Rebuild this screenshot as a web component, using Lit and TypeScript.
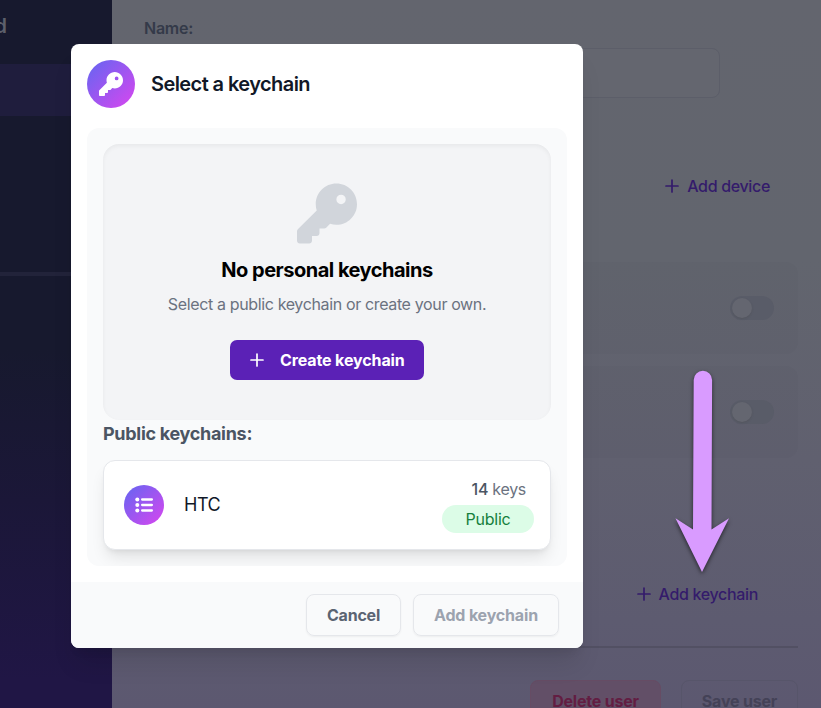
import { LitElement, html, css, svg } from "lit";
import { customElement, property } from "lit/decorators.js";

const keyIcon = (cls: string) => html`<svg class=${cls} viewBox="0 0 512 512" fill="currentColor"><path d="M336 352c97.2 0 176-78.8 176-176S433.2 0 336 0S160 78.8 160 176c0 18.7 2.9 36.8 8.3 53.7L7 391c-4.5 4.5-7 10.6-7 17v80c0 13.3 10.7 24 24 24h80c13.3 0 24-10.7 24-24V448h40c13.3 0 24-10.7 24-24V384h40c6.4 0 12.5-2.5 17-7l33.3-33.3c16.9 5.4 35 8.3 53.7 8.3zM376 96a40 40 0 1 1 0 80 40 40 0 1 1 0-80z"/></svg>`;

const plusIcon = html`<svg class="plus" viewBox="0 0 14 14" fill="none" stroke="currentColor" stroke-width="1.7" stroke-linecap="round"><path d="M7 1v12M1 7h12"/></svg>`;

const listIcon = html`<svg class="list" viewBox="0 0 20 16" fill="currentColor">${[2.5, 8, 13.5].map(
  (y) => svg`<circle cx="3.3" cy=${y} r="2"/><rect x="7" y=${y - 1.2} width="12" height="2.4" rx="1.1"/>`
)}</svg>`;

@customElement("app-backdrop")
export class AppBackdrop extends LitElement {
  static styles = css`
    :host { display: flex; height: 708px; overflow: hidden; }
    * { box-sizing: border-box; }
    .side { width: 112px; flex: none; overflow: hidden; background: linear-gradient(#17192e 0, #17192e 350px, #1b1738 500px, #201645 680px); }
    .brand { display: flex; justify-content: flex-end; width: 7px; height: 64px; padding-top: 11px; font: 600 20px/30px Inter, sans-serif; color: #5d606c; }
    .active { height: 52px; background: #1f1d3d; }
    .rule { height: 4px; margin-top: 156px; background: #22233a; }
    .main { flex: 1; padding: 16px 23px 0 32px; display: flex; flex-direction: column; background: linear-gradient(#63656e 0, #62656e 260px, #60606f 460px, #5d5b70 620px, #5c5870 708px); }
    .main > * { flex-shrink: 0; }
    .label { font: 600 16px/24px Inter, sans-serif; color: #343a49; letter-spacing: -.25px; }
    .input { width: 576px; height: 50px; margin-top: 8px; border: 1px solid #5c5e69; border-radius: 8px; background: #64666f; }
    .add { display: flex; align-items: center; gap: 8px; align-self: flex-end; height: 24px; font: 500 16px/24px Inter, sans-serif; color: #341b6b; letter-spacing: -.33px; white-space: nowrap; }
    .device { margin: 76px 28px 0 0; }
    .chain { margin: 124px 40px 0 0; }
    .plus { width: 14px; height: 14px; }
    .row { height: 92px; border-radius: 12px; background: #0f172a05; display: flex; justify-content: flex-end; align-items: center; padding-right: 24px; }
    .first { margin: 64px 0 12px; }
    .toggle { width: 44px; height: 24px; padding: 2px; border-radius: 12px; background: #595c68; }
    .knob { width: 20px; height: 20px; border-radius: 50%; background: #646670; box-shadow: 0 1px 2px #4444; }
    .line { height: 2px; margin-top: 40px; background: #525063; }
    .actions { display: flex; justify-content: flex-end; gap: 20px; margin-top: 32px; }
    .btn { height: 42px; border: 1px solid #57556a; border-radius: 8px; font: 700 16px/40px Inter, sans-serif; text-align: center; letter-spacing: -.2px; }
    .delete { width: 131px; background: #624f67; border-color: #664c64; color: #631d42; }
    .save { width: 117px; color: #444257; }
  `;
  render() {
    return html`
      <div class="side"><div class="brand">d</div><div class="active"></div><div class="rule"></div></div>
      <div class="main">
        <div class="label">Name:</div>
        <div class="input"></div>
        <div class="add device">${plusIcon}<span>Add device</span></div>
        <div class="row first"><div class="toggle"><div class="knob"></div></div></div>
        <div class="row"><div class="toggle"><div class="knob"></div></div></div>
        <div class="add chain">${plusIcon}<span>Add keychain</span></div>
        <div class="line"></div>
        <div class="actions"><div class="btn delete">Delete user</div><div class="btn save">Save user</div></div>
      </div>`;
  }
}

@customElement("keychain-card")
export class KeychainCard extends LitElement {
  @property() name = "";
  @property({ type: Number }) keys = 0;
  static styles = css`
    :host { display: flex; align-items: center; box-sizing: border-box; height: 90px; padding: 0 16px 0 20px; border: 1px solid #e5e7eb; border-radius: 12px; background: #fff; box-shadow: 0 10px 15px -3px #0000001a, 0 4px 6px -4px #0000001a; }
    .disc { width: 40px; height: 40px; border-radius: 50%; display: grid; place-items: center; color: #fff; background: linear-gradient(135deg, #6366f1, #d946ef); }
    .list { width: 20px; height: 16px; display: block; }
    .name { flex: 1; margin-left: 20px; font: 400 18px/28px Inter, sans-serif; color: #111827; letter-spacing: -.45px; }
    .meta { display: flex; flex-direction: column; align-items: flex-end; font: 400 16px/24px Inter, sans-serif; color: #6b7280; }
    .count { margin: 0 8px 4px 0; letter-spacing: -.3px; }
    b { font-weight: 500; color: #4b5563; }
    .badge { width: 92px; height: 28px; line-height: 28px; border-radius: 14px; text-align: center; background: #dcfce7; color: #15803d; letter-spacing: -.25px; }
  `;
  render() {
    return html`<div class="disc">${listIcon}</div><div class="name">${this.name}</div>
      <div class="meta"><div class="count"><b>${this.keys}</b> keys</div><div class="badge">Public</div></div>`;
  }
}

@customElement("app-root")
export class AppRoot extends LitElement {
  static styles = css`
    :host { display: block; position: relative; width: 821px; height: 708px; overflow: hidden; font-family: Inter, sans-serif; }
    * { box-sizing: border-box; }
    .modal { position: absolute; left: 71px; top: 44px; width: 512px; border-radius: 8px; background: #fff; overflow: hidden; }
    .shadow { position: absolute; left: 71px; top: 44px; width: 512px; height: 604px; border-radius: 8px; box-shadow: 0 20px 25px -5px #0000001a, 0 8px 10px -6px #0000001a; }
    .head { display: flex; align-items: center; gap: 16px; height: 84px; padding: 16px 16px 20px; }
    .disc { width: 48px; height: 48px; border-radius: 50%; display: grid; place-items: center; color: #fff; background: linear-gradient(135deg, #6366f1, #d946ef); }
    .key-sm { width: 24px; height: 24px; }
    .title { font-weight: 600; font-size: 20px; line-height: 28px; color: #111827; letter-spacing: -.58px; }
    .panel { margin: 0 16px 16px; padding: 16px; height: 438px; border-radius: 12px; background: #f9fafb; overflow: hidden; }
    .empty { height: 276px; padding-top: 39px; border-radius: 16px; background: #f3f4f6; box-shadow: inset 0 2px 4px #0000000d; display: flex; flex-direction: column; align-items: center; }
    .key-lg { width: 60px; height: 61px; color: #d1d5db; }
    .none { margin-top: 12px; font-weight: 700; font-size: 20px; line-height: 28px; color: #000; letter-spacing: -.5px; }
    .hint { margin-top: 8px; font-size: 16px; line-height: 24px; color: #6b7280; letter-spacing: -.36px; }
    .create { display: flex; align-items: center; gap: 16px; margin-top: 24px; width: 194px; height: 40px; padding-left: 20px; border-radius: 7px; background: #5b21b6; color: #fff; font-weight: 700; font-size: 16px; letter-spacing: -.12px; white-space: nowrap; }
    .plus { width: 14px; height: 14px; }
    .sub { margin-bottom: 12px; font-weight: 700; font-size: 18px; line-height: 28px; color: #4b5563; letter-spacing: -.3px; }
    .foot { display: flex; justify-content: flex-end; gap: 12px; height: 66px; padding: 12px 24px; background: #f9fafb; }
    .btn { height: 42px; border: 1px solid #e5e7eb; border-radius: 8px; text-align: center; font-weight: 700; font-size: 16px; line-height: 40px; box-shadow: 0 1px 2px #0000000d; }
    .cancel { width: 95px; color: #5b6472; letter-spacing: -.2px; }
    .confirm { width: 146px; color: #9ca3af; letter-spacing: -.18px; }
    .arrow { position: absolute; left: 668px; top: 362px; width: 70px; height: 224px; filter: drop-shadow(0 2px 2px #0009); }
  `;
  render() {
    return html`
      <app-backdrop></app-backdrop>
      <div class="shadow"></div>
      <div class="modal">
        <div class="head"><div class="disc">${keyIcon("key-sm")}</div><div class="title">Select a keychain</div></div>
        <div class="panel">
          <div class="empty">
            ${keyIcon("key-lg")}
            <div class="none">No personal keychains</div>
            <div class="hint">Select a public keychain or create your own.</div>
            <div class="create">${plusIcon}<span>Create keychain</span></div>
          </div>
          <div class="sub">Public keychains:</div>
          <keychain-card name="HTC" .keys=${14}></keychain-card>
        </div>
        <div class="foot"><div class="btn cancel">Cancel</div><div class="btn confirm">Add keychain</div></div>
      </div>
      <svg class="arrow" viewBox="668 362 70 224"><path fill="#d99bff" d="M693.7 380A9.2 9.2 0 0 1 712.1 380L711.5 529.5L729 518.3L702 572L675.5 518.3L693 529.5Z"/></svg>`;
  }
}
